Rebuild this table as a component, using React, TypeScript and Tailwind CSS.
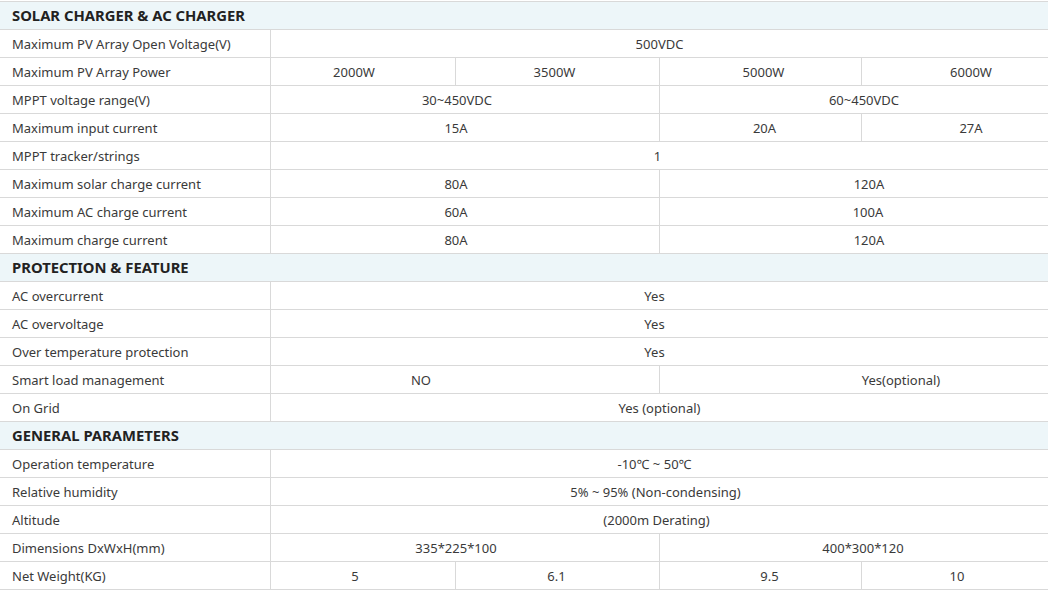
type Cell = { text: string; span: 1 | 2 | 4; cls?: string };
type Row = { label: string; cells: Cell[] } | { section: string };

const spanCls = { 1: 'col-span-1', 2: 'col-span-2', 4: 'col-span-4' };

const rows: Row[] = [
  { section: 'SOLAR CHARGER & AC CHARGER' },
  { label: 'Maximum PV Array Open Voltage(V)', cells: [{ text: '500VDC', span: 4 }] },
  {
    label: 'Maximum PV Array Power',
    cells: [
      { text: '2000W', span: 1, cls: 'pr-[18px]' },
      { text: '3500W', span: 1, cls: 'pr-[6px]' },
      { text: '5000W', span: 1, cls: 'pl-[6px]' },
      { text: '6000W', span: 1, cls: 'pl-[32px]' },
    ],
  },
  {
    label: 'MPPT voltage range(V)',
    cells: [
      { text: '30~450VDC', span: 2, cls: 'pr-[16px]' },
      { text: '60~450VDC', span: 2, cls: 'pl-[20px]' },
    ],
  },
  {
    label: 'Maximum input current',
    cells: [
      { text: '15A', span: 2, cls: 'pr-[18px]' },
      { text: '20A', span: 1, cls: 'pl-[8px]' },
      { text: '27A', span: 1, cls: 'pl-[32px]' },
    ],
  },
  { label: 'MPPT tracker/strings', cells: [{ text: '1', span: 4, cls: 'pr-[4px]' }] },
  {
    label: 'Maximum solar charge current',
    cells: [
      { text: '80A', span: 2, cls: 'pr-[18px]' },
      { text: '120A', span: 2, cls: 'pl-[30px]' },
    ],
  },
  {
    label: 'Maximum AC charge current',
    cells: [
      { text: '60A', span: 2, cls: 'pr-[18px]' },
      { text: '100A', span: 2, cls: 'pl-[28px]' },
    ],
  },
  {
    label: 'Maximum charge current',
    cells: [
      { text: '80A', span: 2, cls: 'pr-[18px]' },
      { text: '120A', span: 2, cls: 'pl-[30px]' },
    ],
  },
  { section: 'PROTECTION & FEATURE' },
  { label: 'AC overcurrent', cells: [{ text: 'Yes', span: 4, cls: 'pr-[10px]' }] },
  { label: 'AC overvoltage', cells: [{ text: 'Yes', span: 4, cls: 'pr-[10px]' }] },
  { label: 'Over temperature protection', cells: [{ text: 'Yes', span: 4, cls: 'pr-[10px]' }] },
  {
    label: 'Smart load management',
    cells: [
      { text: 'NO', span: 2, cls: 'pr-[88px]' },
      { text: 'Yes(optional)', span: 2, cls: 'pl-[94px]' },
    ],
  },
  { label: 'On Grid', cells: [{ text: 'Yes (optional)', span: 4, cls: 'pt-[3px]' }] },
  { section: 'GENERAL PARAMETERS' },
  { label: 'Operation temperature', cells: [{ text: '-10℃ ~ 50℃', span: 4, cls: 'pr-[10px]' }] },
  { label: 'Relative humidity', cells: [{ text: '5% ~ 95% (Non-condensing)', span: 4, cls: 'pr-[8px]' }] },
  { label: 'Altitude', cells: [{ text: '(2000m Derating)', span: 4, cls: 'pr-[6px]' }] },
  {
    label: 'Dimensions DxWxH(mm)',
    cells: [
      { text: '335*225*100', span: 2, cls: 'pr-[18px]' },
      { text: '400*300*120', span: 2, cls: 'pl-[18px]' },
    ],
  },
  {
    label: 'Net Weight(KG)',
    cells: [
      { text: '5', span: 1, cls: 'pr-[16px]' },
      { text: '6.1', span: 1, cls: 'pr-[2px]' },
      { text: '9.5', span: 1, cls: 'pl-[18px]' },
      { text: '10', span: 1, cls: 'pl-[4px]' },
    ],
  },
];

export default function App() {
  return (
    <div className="h-[590px] w-[1054px] overflow-hidden bg-white pt-px" style={{ fontFamily: '"Noto Sans", "Liberation Sans", sans-serif' }}>
      <div className="grid w-[1048px] grid-cols-[271px_185px_204px_202px_186px] border-t border-[#d9d9d9] text-[13px] text-[#3a3a3a]">
        {rows.map((row, i) =>
          'section' in row ? (
            <div
              key={i}
              className="col-span-5 flex h-[28px] items-center border-b border-[#d9d9d9] bg-[#edf6f9] pl-[12px] text-[14.8px] font-bold text-[#222]"
            >
              {row.section}
            </div>
          ) : (
            [
              <div key={i + 'l'} className="flex h-[28px] items-center border-b border-r border-[#d9d9d9] pl-[12px] pt-[2px]">
                {row.label}
              </div>,
              ...row.cells.map((c, j) => (
                <div
                  key={i + '-' + j}
                  className={`${spanCls[c.span]} flex h-[28px] items-center justify-center border-b border-[#d9d9d9] pt-[2px] ${
                    j < row.cells.length - 1 ? 'border-r' : ''
                  } ${c.cls ?? ''}`}
                >
                  {c.text}
                </div>
              )),
            ]
          )
        )}
      </div>
    </div>
  );
}
